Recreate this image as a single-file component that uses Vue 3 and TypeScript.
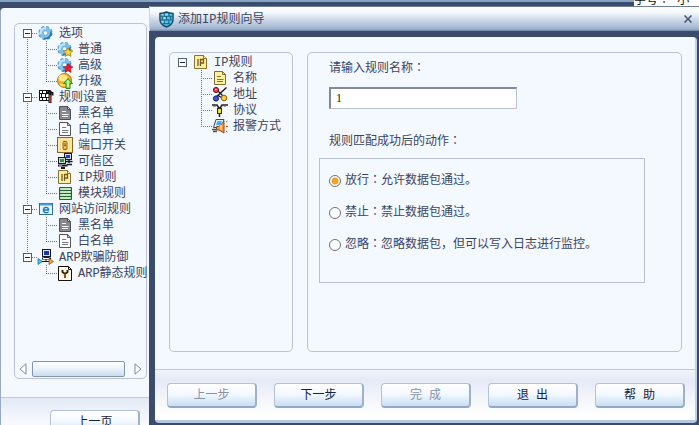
<script setup lang="ts">
import { ref } from 'vue'

interface TreeNode {
  label: string
  icon: string
  children?: TreeNode[]
}

const sheet = (fill: string, stroke: string, line: string, fold: string) =>
  `<path d="M2.5 1.5H10.5L13.5 4.5V14.5H2.5Z" fill="${fill}" stroke="${stroke}"/><path d="M10.5 1.5V4.5H13.5Z" fill="${fold}" stroke="${stroke}"/><path d="M5 6.5H9M5 9.5H11.500M5 11.5H11" stroke="${line}"/>`

const gear =
  '<circle cx="7.500" cy="8" r="5.800" fill="none" stroke="#4a9bcb" stroke-width="2.600" stroke-dasharray="2.700 1.855"/><circle cx="7.500" cy="8" r="4.200" fill="none" stroke="#7fc0ea" stroke-width="4"/><path d="M2.800 9A4.800 4.800 0 0 1 8 3.200" fill="none" stroke="#c2e6fb" stroke-width="2"/><path d="M12.800 6.500A5.500 5.500 0 0 1 6 13.300" fill="none" stroke="#2577ae" stroke-width="1.600"/><circle cx="7.500" cy="8" r="2.200" fill="#f4f9ff" stroke="#4b91bd" stroke-width=".6"/>'

const star = (fill: string, stroke: string) =>
  `<path d="M11 6.500L12.400 9.600L15.800 9.900L13.200 12L14 15.400L11 13.600L8 15.400L8.800 12L6.200 9.900L9.600 9.600Z" fill="${fill}" stroke="${stroke}" stroke-width=".8"/>`

const icons: Record<string, string> = {
  gear,
  gearYellow: gear + star('#ffd92b', '#9b7a10'),
  gearRed: gear + star('#ee1c24', '#b20d18'),
  upgrade:
    '<circle cx="7.500" cy="7.500" r="7" fill="#f5ad25" stroke="#b47412"/><ellipse cx="6" cy="5" rx="4.500" ry="3.500" fill="#ffe98b"/><path d="M3 11Q7 14 12 10" fill="none" stroke="#ffe250" stroke-width="2"/><path d="M11 5.500L15.500 10.500H13V15.500H9V10.500H6.500Z" fill="#83e052" stroke="#2e8c20"/><path d="M11 7.500V14" stroke="#d9ffb9" stroke-width="1.500"/>',
  wall:
    '<path d="M1.500 1.500H12.500V11.500H1.500Z" fill="#fff" stroke="#111"/><path d="M1 1.500H12M1 4.500H12M1 8.500H12M4.500 2V4M8.500 2V4M3.500 5V8M7.500 5V8M4.500 9V11M8.500 9V11" stroke="#111"/><path d="M8 5Q11 1 14.500 4V6.500" fill="none" stroke="#111" stroke-width="2"/><path d="M12 4V14" stroke="#111" stroke-width="3"/><path d="M12 6V13.500" stroke="#e14a3b" stroke-width="1.400"/>',
  blackList: sheet('#86888c', '#505258', '#f3f3f3', '#dcdde0'),
  whiteList: sheet('#fdfdff', '#55575d', '#777a82', '#e4e6ea'),
  port:
    '<rect x=".5" y=".5" width="15" height="15" fill="#fcd98d" stroke="#8d641e"/><rect x="2" y="2" width="12" height="12" fill="none" stroke="#fff0bd"/><path d="M4 4H12V12H4Z" fill="#fff0bd"/><rect x="6" y="4.500" width="4" height="8" rx="1" fill="#f3bb42" stroke="#87601b"/><path d="M7 8.500H9M8 6V8" stroke="#87601b"/>',
  trusted:
    '<rect x="7.500" y=".5" width="7" height="6" fill="#d5d9e2" stroke="#161827"/><rect x="9" y="2" width="4" height="3" fill="#163fd6"/><path d="M8 8.500H15.500M12 7V10M10 11.500H15" stroke="#161827" stroke-width="1.500"/><rect x="1.500" y="4.500" width="7" height="6" fill="#cddccb" stroke="#161827"/><rect x="3" y="6" width="4" height="3" fill="#34904d"/><path d="M1 12.500H10.500M4 15H8" stroke="#161827" stroke-width="2"/><path d="M2 12.500H5" stroke="#4bb768"/>',
  ip:
    '<path d="M1.500 1.500H10.500L13.500 4.500V14.500H1.500Z" fill="#fff0a8" stroke="#8b7129"/><path d="M10.500 1.500V4.500H13.500" fill="#fffbe1" stroke="#8b7129"/><path d="M5 5V12M7.500 12V5.500H10.500V9H8" fill="none" stroke="#75581b" stroke-width="1.300"/>',
  module:
    '<path d="M2.500 2.500H14.500V14.500H2.500Z" fill="#aedda5" stroke="#245f35"/><path d="M2 5.500H15M2 8.500H15M2 11.500H15" stroke="#245f35"/><path d="M4 4H13M4 7H13M4 10H13M4 13H13" stroke="#e0f4d8"/>',
  web:
    '<rect x="1.500" y="2.500" width="13" height="11" fill="#e5f5ff" stroke="#35699b"/><path d="M2 3.500H14" stroke="#4a9ee4" stroke-width="2"/><path d="M5 9H10.500C10.500 5.400 5.500 5.500 5.500 9C5.500 12.200 9.300 12.400 10.500 10.600" fill="none" stroke="#197bc8" stroke-width="1.400"/>',
  arp:
    '<rect x="4.500" y=".5" width="8" height="7" fill="#e2e5ef" stroke="#151821"/><rect x="6" y="2" width="5" height="4" fill="#1735b9"/><path d="M4 9.500H13M6 8H11" stroke="#151821" stroke-width="2"/><path d="M5 9.500H11" stroke="#fff"/><path d="M0 9.500L4.500 12.500L0 15.500Z" fill="#42bff1" stroke="#126b9b" stroke-width=".7"/><path d="M4 12.500H11M8 10V12" stroke="#151821"/><path d="M11 9.500L15.500 12.500L11 15.500Z" fill="#f8a72d" stroke="#965516" stroke-width=".8"/>',
  arpStatic:
    '<path d="M1.500 1.500H11.500L14.500 4.500V15.500H1.500Z" fill="#fffbe8" stroke="#17130c"/><path d="M11.500 1.500V4.500H14.500" fill="none" stroke="#17130c"/><path d="M5.500 5V7L8 9L10.500 7V5M8 8V13" fill="none" stroke="#402515" stroke-width="2"/><path d="M8 9V13" stroke="#b9822d"/>',
  name: sheet('#fff1a5', '#82702b', '#8b7429', '#fffbe1'),
  address:
    '<path d="M2 13L14.500 1.500M5 4L12 11M6 9.500L12 13" stroke="#15151b" stroke-width="1.400"/><circle cx="4" cy="4" r="2.600" fill="#e93b4c" stroke="#6e1220"/><circle cx="4" cy="12.500" r="2.600" fill="#3557e8" stroke="#152268"/><circle cx="12" cy="12" r="2.800" fill="#ffc843" stroke="#876112"/><path d="M3 3.500H4.500" stroke="#ffd4d8"/>',
  protocol:
    '<path d="M0 3H5L7.500 7L10 3H16" fill="none" stroke="#222" stroke-width="1.600"/><path d="M1 4.500H4M11.500 4.500H14" stroke="#a1a5a5"/><rect x="5.500" y="6.500" width="4" height="5" fill="#f4db33" stroke="#302c12"/><path d="M7.500 12V15" stroke="#222" stroke-width="1.500"/>',
  alarm:
    '<path d="M4 1.500H12L9.500 9.500H1.500Z" fill="#d9f3ff" stroke="#334e65"/><path d="M5.500 3H10L8.500 7H4Z" fill="#4aaee8"/><path d="M0 11.500H5M1 13.500H5" stroke="#48505b" stroke-width="1.300"/><path d="M4.500 8.500H7L12 3.500V15L7 12H4.500Z" fill="#f59a3f" stroke="#97421c"/><path d="M9 7V12" stroke="#ffe1a2" stroke-width="1.300"/><path d="M14 4L15.500 3M14 8.500H16M14 13L15.500 14" stroke="#de4c24"/>',
}

const mainTree: TreeNode[] = [
  {
    label: '选项',
    icon: 'gear',
    children: [
      { label: '普通', icon: 'gearYellow' },
      { label: '高级', icon: 'gearRed' },
      { label: '升级', icon: 'upgrade' },
    ],
  },
  {
    label: '规则设置',
    icon: 'wall',
    children: [
      { label: '黑名单', icon: 'blackList' },
      { label: '白名单', icon: 'whiteList' },
      { label: '端口开关', icon: 'port' },
      { label: '可信区', icon: 'trusted' },
      { label: 'IP规则', icon: 'ip' },
      { label: '模块规则', icon: 'module' },
    ],
  },
  {
    label: '网站访问规则',
    icon: 'web',
    children: [
      { label: '黑名单', icon: 'blackList' },
      { label: '白名单', icon: 'whiteList' },
    ],
  },
  {
    label: 'ARP欺骗防御',
    icon: 'arp',
    children: [{ label: 'ARP静态规则', icon: 'arpStatic' }],
  },
]

const wizardTree: TreeNode[] = [
  {
    label: 'IP规则',
    icon: 'ip',
    children: [
      { label: '名称', icon: 'name' },
      { label: '地址', icon: 'address' },
      { label: '协议', icon: 'protocol' },
      { label: '报警方式', icon: 'alarm' },
    ],
  },
]

const actions = [
  { value: 'allow', title: '放行', text: '允许数据包通过。' },
  { value: 'deny', title: '禁止', text: '禁止数据包通过。' },
  { value: 'ignore', title: '忽略', text: '忽略数据包，但可以写入日志进行监控。' },
]

const buttons = [
  { label: '上一步', disabled: true },
  { label: '下一步', disabled: false },
  { label: '完 成', disabled: true },
  { label: '退 出', disabled: false },
  { label: '帮 助', disabled: false },
]

const ruleName = ref('1')
const action = ref('allow')

// Vertical guide beside an expander: joins the roots above and below it.
function rootLines(index: number, count: number): string {
  if (count === 1) return ''
  const up = index > 0 ? 'M8.5 0V4' : ''
  const down = index < count - 1 ? 'M8.5 12V16' : ''
  return `${up}${down}M13 8.5H19`
}
</script>

<template>
  <div class="desktop">
    <div class="strip">
      <span class="strip-text">字号<span class="colon">：</span> 小</span>
    </div>
    <div class="windows">
      <section class="back">
        <div class="back-body">
          <div class="panel tree-panel">
            <ul class="tree">
              <li v-for="(root, r) in mainTree" :key="root.label">
                <div class="row">
                  <svg class="guide" viewBox="0 0 19 16">
                    <path class="dots" :d="rootLines(r, mainTree.length)" />
                    <rect class="box" x="4.5" y="4.5" width="8" height="8" />
                    <path class="minus" d="M6 8.5H11" />
                  </svg>
                  <svg class="icon" viewBox="0 0 16 16" v-html="icons[root.icon]"></svg>
                  <span class="name">{{ root.label }}</span>
                </div>
                <ul class="tree">
                  <li v-for="(leaf, i) in root.children" :key="leaf.label" class="row">
                    <svg class="guide" viewBox="0 0 19 16">
                      <path v-if="r < mainTree.length - 1" class="dots" d="M8.5 0V16" />
                    </svg>
                    <svg class="guide" viewBox="0 0 19 16">
                      <path
                        class="dots"
                        :d="i < root.children!.length - 1 ? 'M8.5 0V16M10 8.5H19' : 'M8.5 0V9M10 8.5H19'"
                      />
                    </svg>
                    <svg class="icon" viewBox="0 0 16 16" v-html="icons[leaf.icon]"></svg>
                    <span class="name">{{ leaf.label }}</span>
                  </li>
                </ul>
              </li>
            </ul>
            <div class="scroll">
              <button class="arrow" type="button" aria-label="向左滚动">
                <svg viewBox="0 0 8 12"><path d="M7 .8V11.200L1 6Z" /></svg>
              </button>
              <div class="track"><div class="thumb"></div></div>
              <button class="arrow" type="button" aria-label="向右滚动">
                <svg viewBox="0 0 8 12"><path d="M1 .8V11.200L7 6Z" /></svg>
              </button>
            </div>
          </div>
        </div>
        <div class="back-foot">
          <button class="btn" type="button">上一页</button>
        </div>
      </section>

      <section class="dialog" role="dialog" aria-labelledby="dialog-title">
        <header class="titlebar">
          <svg class="shield" viewBox="0 0 16 18">
            <path
              d="M8 1Q11 2.500 15 2.500V9C15 13 12 15.500 8 17C4 15.500 1 13 1 9V2.500Q5 2.500 8 1Z"
              fill="#4fc4e8"
              stroke="#1d4963"
              stroke-width="1.500"
            />
            <path
              d="M2 5.500H14M2 9.500H14M4 13.500H12M5.500 2V5M10.500 2V5M8 6V9M3.500 6V9M12.500 6V9M5.500 10V13M10.500 10V13"
              stroke="#16516f"
            />
            <path d="M3 4H5M6.500 4H9.500M4.500 7.500H7M3 11.500H5" stroke="#c6f5ff" />
          </svg>
          <h1 id="dialog-title">添加IP规则向导</h1>
          <button class="close" type="button" aria-label="关闭">
            <svg viewBox="0 0 8 8"><path d="M.5 .5L7.500 7.500M7.500 .5L.5 7.500" /></svg>
          </button>
        </header>
        <div class="frame">
          <form class="sheet" @submit.prevent>
            <div class="content">
              <nav class="panel tree-panel">
                <ul class="tree">
                  <li v-for="root in wizardTree" :key="root.label">
                    <div class="row">
                      <svg class="guide" viewBox="0 0 19 16">
                        <rect class="box" x="4.5" y="4.5" width="8" height="8" />
                        <path class="minus" d="M6 8.5H11" />
                      </svg>
                      <svg class="icon" viewBox="0 0 16 16" v-html="icons[root.icon]"></svg>
                      <span class="name">{{ root.label }}</span>
                    </div>
                    <ul class="tree">
                      <li v-for="(leaf, i) in root.children" :key="leaf.label" class="row">
                        <span class="guide"></span>
                        <svg class="guide" viewBox="0 0 19 16">
                          <path
                            class="dots"
                            :d="i < root.children!.length - 1 ? 'M8.5 0V16M10 8.5H19' : 'M8.5 0V9M10 8.5H19'"
                          />
                        </svg>
                        <svg class="icon" viewBox="0 0 16 16" v-html="icons[leaf.icon]"></svg>
                        <span class="name">{{ leaf.label }}</span>
                      </li>
                    </ul>
                  </li>
                </ul>
              </nav>
              <div class="panel fields">
                <label class="caption" for="rule-name">请输入规则名称<span class="colon">：</span></label>
                <input id="rule-name" v-model="ruleName" class="text" type="text" />
                <p id="action-caption" class="caption">规则匹配成功后的动作<span class="colon">：</span></p>
                <div class="group" role="radiogroup" aria-labelledby="action-caption">
                  <label v-for="item in actions" :key="item.value" class="choice">
                    <input v-model="action" type="radio" name="action" :value="item.value" />
                    <span>{{ item.title }}<span class="colon">：</span>{{ item.text }}</span>
                  </label>
                </div>
              </div>
            </div>
            <footer class="foot">
              <button
                v-for="b in buttons"
                :key="b.label"
                class="btn"
                type="button"
                :disabled="b.disabled"
              >
                {{ b.label }}
              </button>
            </footer>
          </form>
        </div>
      </section>
    </div>
  </div>
</template>

<style>
body {
  margin: 0;
}
</style>

<style scoped>
.desktop {
  display: flex;
  flex-direction: column;
  height: 100vh;
  overflow: hidden;
  background: #3a4b6b;
  color: #3a4560;
  font-family: 'Liberation Mono', 'Noto Sans CJK SC', monospace;
  font-size: 12px;
  line-height: 16px;
}
.desktop * {
  box-sizing: border-box;
}
.colon {
  font-family: 'Noto Sans CJK TC', sans-serif;
  line-height: 0;
}
.strip {
  display: flex;
  justify-content: flex-end;
  align-items: flex-end;
  flex: none;
  height: 6px;
  overflow: hidden;
  background: linear-gradient(#86a4c4 0 2px, #3a4b6b 2px);
}
.strip-text {
  flex: none;
  width: 65px;
  background: #fff;
  color: #111;
  line-height: 10px;
  white-space: pre;
}
.windows {
  display: grid;
  grid-template-columns: 149px minmax(0, 1fr);
  grid-template-rows: minmax(0, 1fr);
  flex: 1;
  min-height: 0;
}
.back {
  display: flex;
  flex-direction: column;
  min-width: 0;
  margin-top: 2px;
  overflow: hidden;
  border-left: 1px solid #9aa8c0;
  border-radius: 4px 0 0 0;
  background: #f4f8ff;
}
.back-body {
  display: flex;
  flex: none;
  padding: 15px 2px 18px 13px;
}
.panel {
  min-width: 0;
  border: 1px solid #bcc3d8;
  border-radius: 5px;
  background: #f4f8ff;
}
.tree-panel {
  padding: 1px 0 0 4px;
}
.back .tree-panel {
  display: flex;
  flex-direction: column;
  flex: 1;
  min-height: 356px;
}
.tree {
  margin: 0;
  padding: 0;
  list-style: none;
}
.back .tree-panel > .tree {
  flex: 1;
}
.row {
  display: flex;
  align-items: center;
  height: 16px;
}
.guide {
  flex: none;
  width: 19px;
  height: 16px;
}
.dots {
  fill: none;
  stroke: #6f7888;
  stroke-dasharray: 1 1;
}
.box {
  fill: #fff;
  stroke: #555d70;
}
.minus {
  stroke: #222a40;
}
.icon {
  flex: none;
  width: 16px;
  height: 16px;
  overflow: visible;
}
.name {
  padding-top: 2px;
  margin-left: 5px;
  white-space: nowrap;
}
.scroll {
  display: flex;
  align-items: center;
  gap: 5px;
  height: 18px;
  padding-right: 4px;
}
.arrow {
  flex: none;
  width: 8px;
  height: 12px;
  padding: 0;
  border: 0;
  background: none;
}
.arrow svg {
  display: block;
  width: 8px;
  height: 12px;
  fill: #fff;
  stroke: #7d8ba5;
}
.track {
  flex: 1;
  padding-right: 4px;
}
.thumb {
  height: 16px;
  border: 1px solid #8296b4;
  border-radius: 2px;
  background: linear-gradient(#fff, #e9f2fb 50%, #cbdcec);
}
.back-foot {
  flex: 1 0 auto;
  padding: 12px 9px 0 49px;
  border-top: 1px solid #c2c8d8;
  background: linear-gradient(#e3eaf6, #f6f9ff 24px);
}
.btn {
  width: 90px;
  height: 25px;
  padding: 2px 0 0;
  border: 1px solid #b3c0d6;
  border-right: 2px solid #9fb0ca;
  border-bottom: 2px solid #94a8c4;
  border-radius: 4px;
  background: linear-gradient(#fff, #f4f9ff 45%, #c8dff3);
  color: #18223c;
  font: inherit;
}
.btn:disabled {
  color: #8692a8;
}
.dialog {
  display: flex;
  flex-direction: column;
  min-width: 0;
}
.titlebar {
  display: flex;
  align-items: center;
  flex: none;
  height: 25px;
  padding: 0 7px 0 9px;
  border-top: 1px solid #6b7e9d;
  border-left: 1px solid #c9d5e6;
  background: linear-gradient(#fff, #f3f7fc 25%, #c5d3e5 58%, #a3b6d0 90%, #7189ab);
}
.shield {
  width: 15px;
  height: 17px;
}
.titlebar h1 {
  flex: 1;
  margin: 0 0 0 4px;
  padding-top: 2px;
  font-size: 12px;
  font-weight: 400;
}
.close {
  width: 8px;
  height: 8px;
  padding: 0;
  border: 0;
  background: none;
}
.close svg {
  display: block;
  width: 8px;
  height: 8px;
  stroke: #46536f;
  stroke-width: 1.5;
}
.frame {
  display: flex;
  flex: 1;
  min-height: 0;
  padding: 6px 2px 2px 6px;
}
.sheet {
  display: flex;
  flex-direction: column;
  flex: 1;
  min-width: 0;
  border-right: 2px solid #bcd3ec;
  border-bottom: 3px solid #b4c8e2;
  border-radius: 4px;
  background: #f4f8ff;
}
.content {
  display: grid;
  grid-template-columns: 124px minmax(0, 1fr);
  gap: 14px;
  flex: 1;
  padding: 15px 13px 17px 14px;
}
.fields {
  display: flex;
  flex-direction: column;
  align-items: flex-start;
  padding: 8px 36px 0 11px;
}
.caption {
  margin: 0 0 0 10px;
}
.text {
  width: 188px;
  height: 22px;
  margin: 10px 0 25px 10px;
  padding: 0 5px;
  border: 1px solid #b9c1d2;
  border-top: 2px solid #8389a0;
  border-left: 2px solid #8389a0;
  background: #fff;
  color: #222;
  font: 12px/18px 'Liberation Serif', serif;
  outline: none;
}
.group {
  display: flex;
  flex-direction: column;
  gap: 16px;
  align-self: stretch;
  min-height: 125px;
  margin-top: 8px;
  padding: 14px 9px;
  border: 1px solid #b9c0d4;
}
.choice {
  display: flex;
  align-items: center;
  gap: 4px;
}
.choice input {
  flex: none;
  appearance: none;
  width: 12px;
  height: 12px;
  margin: 0;
  border: 1px solid #69728a;
  border-radius: 50%;
  background: #fff;
}
.choice input:checked {
  background: radial-gradient(circle, #f6a21c 0 3px, #fff 4px);
}
.foot {
  display: flex;
  justify-content: space-between;
  flex: none;
  padding: 13px 10px 12px 12px;
  border-top: 1px solid #c2c8d8;
  background: linear-gradient(#f0f4fc, #e5eaf7 10px, #fff 44px);
}
</style>
